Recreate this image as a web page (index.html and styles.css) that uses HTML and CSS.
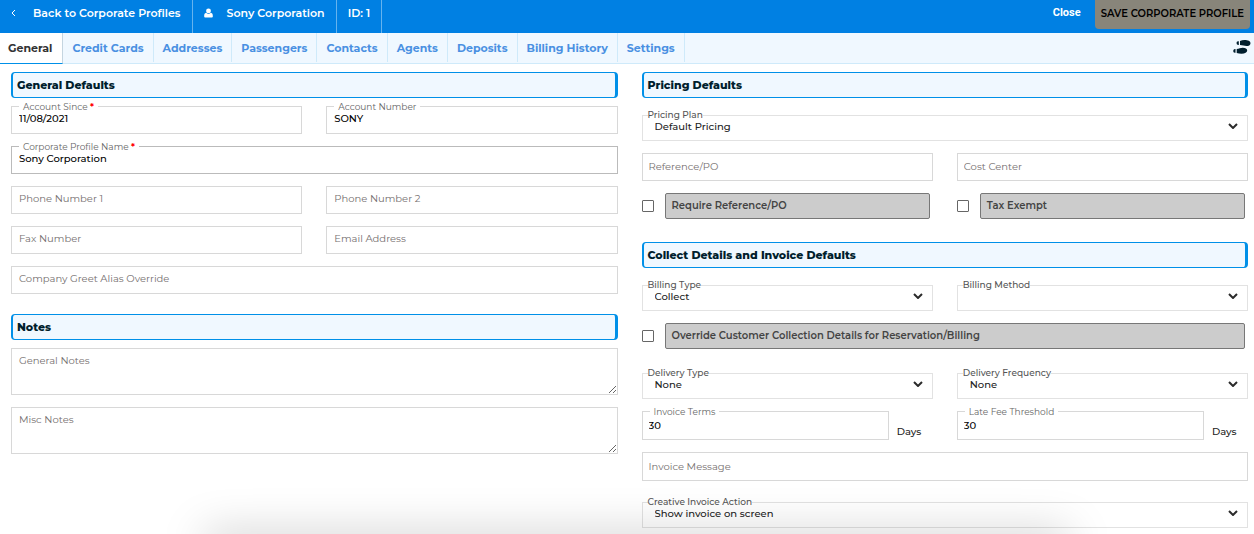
FILE: index.html
```html
<!DOCTYPE html>
<html lang="en">
<head>
    <meta charset="UTF-8">
    <meta name="viewport" content="width=device-width, initial-scale=1.0">
    <title>Corporate Profile</title>
    <link rel="stylesheet" href="styles.css">
</head>
<body>
<header class="topbar">
    <a class="crumb back" href="#">
        <svg class="back-icon" viewBox="0 0 5 8"><path d="M4 1 1 4l3 3"/></svg>
        Back to Corporate Profiles
    </a>
    <span class="crumb">
        <svg class="user-icon" viewBox="0 0 10 10"><circle cx="5" cy="2.7" r="2.7"/><path d="M2.300 4.800C.8 5.200.2 6.500.2 8.200v.7q0 1.100 1.100 1.100h7.400q1.100 0 1.100-1.100v-.7c0-1.700-.6-3-2.100-3.400Q5 7.200 2.300 4.800z"/></svg>
        Sony Corporation
    </span>
    <span class="crumb">ID: 1</span>
    <div class="actions">
        <button type="button" class="close-btn">Close</button>
        <button type="submit" form="profileForm" class="save-btn">SAVE CORPORATE PROFILE</button>
    </div>
</header>

<nav class="tabs">
    <a class="tab active" href="#">General</a>
    <a class="tab" href="#">Credit Cards</a>
    <a class="tab" href="#">Addresses</a>
    <a class="tab" href="#">Passengers</a>
    <a class="tab" href="#">Contacts</a>
    <a class="tab" href="#">Agents</a>
    <a class="tab" href="#">Deposits</a>
    <a class="tab" href="#">Billing History</a>
    <a class="tab" href="#">Settings</a>
    <button type="button" class="steps-btn" aria-label="Activity log">
        <svg class="steps-icon" viewBox="0 0 18 14"><path d="M7 1Q9 .2 11.500 0C15 0 17.500 1.200 17.500 3.200S15.500 6 13.500 6C11.500 6 9.500 5 7 5zM5.800 1.200V5H5Q3.500 4.800 3.500 3.100T5 1.200zM3.700 9C6 9 7.500 7.800 9.800 7.800c2.500 0 4.400 1 4.400 2.700 0 2-2.200 3.200-5.700 3.200Q6 13.600 3.700 13zM2.500 9.100v3.700h-.8Q.2 12.500.2 11t1.500-1.900z"/></svg>
    </button>
</nav>

<form class="columns" id="profileForm">
    <div class="column">
        <section class="section">
            <h2>General Defaults</h2>
            <div class="fields">
                <div class="field">
                    <label for="accountSince">Account Since <b>*</b></label>
                    <input type="text" id="accountSince" value="11/08/2021">
                </div>
                <div class="field">
                    <label for="accountNumber">Account Number</label>
                    <input type="text" id="accountNumber" value="SONY">
                </div>
                <div class="field wide strong">
                    <label for="profileName">Corporate Profile Name <b>*</b></label>
                    <input type="text" id="profileName" value="Sony Corporation">
                </div>
                <div class="field">
                    <input type="tel" placeholder="Phone Number 1" aria-label="Phone Number 1">
                </div>
                <div class="field">
                    <input type="tel" placeholder="Phone Number 2" aria-label="Phone Number 2">
                </div>
                <div class="field">
                    <input type="tel" placeholder="Fax Number" aria-label="Fax Number">
                </div>
                <div class="field">
                    <input type="email" placeholder="Email Address" aria-label="Email Address">
                </div>
                <div class="field wide">
                    <input type="text" placeholder="Company Greet Alias Override" aria-label="Company Greet Alias Override">
                </div>
            </div>
        </section>

        <section class="section">
            <h2>Notes</h2>
            <div class="fields">
                <div class="field wide">
                    <textarea placeholder="General Notes" aria-label="General Notes"></textarea>
                </div>
                <div class="field wide">
                    <textarea placeholder="Misc Notes" aria-label="Misc Notes"></textarea>
                </div>
            </div>
        </section>
    </div>

    <div class="column billing">
        <section class="section">
            <h2>Pricing Defaults</h2>
            <div class="fields">
                <div class="field select wide">
                    <label for="pricingPlan">Pricing Plan</label>
                    <select id="pricingPlan"><option>Default Pricing</option></select>
                    <svg class="chevron" viewBox="0 0 10 6"><path d="M1 1l4 4 4-4"/></svg>
                </div>
                <div class="field">
                    <input type="text" placeholder="Reference/PO" aria-label="Reference/PO">
                </div>
                <div class="field">
                    <input type="text" placeholder="Cost Center" aria-label="Cost Center">
                </div>
                <div class="check">
                    <input type="checkbox" id="requireRef">
                    <label for="requireRef">Require Reference/PO</label>
                </div>
                <div class="check">
                    <input type="checkbox" id="taxExempt">
                    <label for="taxExempt">Tax Exempt</label>
                </div>
            </div>
        </section>

        <section class="section">
            <h2>Collect Details and Invoice Defaults</h2>
            <div class="fields">
                <div class="field select">
                    <label for="billingType">Billing Type</label>
                    <select id="billingType"><option>Collect</option></select>
                    <svg class="chevron" viewBox="0 0 10 6"><path d="M1 1l4 4 4-4"/></svg>
                </div>
                <div class="field select">
                    <label for="billingMethod">Billing Method</label>
                    <select id="billingMethod"><option></option></select>
                    <svg class="chevron" viewBox="0 0 10 6"><path d="M1 1l4 4 4-4"/></svg>
                </div>
                <div class="check wide">
                    <input type="checkbox" id="overrideCollect">
                    <label for="overrideCollect">Override Customer Collection Details for Reservation/Billing</label>
                </div>
                <div class="field select">
                    <label for="deliveryType">Delivery Type</label>
                    <select id="deliveryType"><option>None</option></select>
                    <svg class="chevron" viewBox="0 0 10 6"><path d="M1 1l4 4 4-4"/></svg>
                </div>
                <div class="field select">
                    <label for="deliveryFrequency">Delivery Frequency</label>
                    <select id="deliveryFrequency"><option>None</option></select>
                    <svg class="chevron" viewBox="0 0 10 6"><path d="M1 1l4 4 4-4"/></svg>
                </div>
                <div class="field">
                    <label for="invoiceTerms">Invoice Terms</label>
                    <input class="tall" type="text" id="invoiceTerms" value="30">
                    <span class="unit">Days</span>
                </div>
                <div class="field">
                    <label for="lateFee">Late Fee Threshold</label>
                    <input class="tall" type="text" id="lateFee" value="30">
                    <span class="unit">Days</span>
                </div>
                <div class="field wide">
                    <input class="tall" type="text" placeholder="Invoice Message" aria-label="Invoice Message">
                </div>
                <div class="field select wide">
                    <label for="invoiceAction">Creative Invoice Action</label>
                    <select id="invoiceAction"><option>Show invoice on screen</option></select>
                    <svg class="chevron" viewBox="0 0 10 6"><path d="M1 1l4 4 4-4"/></svg>
                </div>
            </div>
        </section>
    </div>
</form>

<div class="bottom-shade"></div>
</body>
</html>
```
FILE: styles.css
```css
* {
    box-sizing: border-box;
}
body {
    margin: 0;
    font-family: Montserrat, Inter, "Liberation Sans", sans-serif;
    font-size: 10px;
    color: #222;
    background-color: #fff;
}
a {
    text-decoration: none;
}
button, input, select, textarea {
    font-family: inherit;
}

/* top bar */
.topbar {
    display: flex;
    height: 33px;
    background-color: #0080e3;
    color: #fff;
}
.crumb {
    display: flex;
    align-items: center;
    padding: 0 11px 7px;
    border-right: 1px solid #66b3ee;
    color: #fff;
    font-size: 11px;
    font-weight: 600;
}
.back-icon {
    width: 5px;
    height: 8px;
    margin-right: 17px;
    fill: none;
    stroke: #fff;
}
.user-icon {
    width: 9px;
    height: 10px;
    margin-right: 14px;
    fill: #fff;
}
.actions {
    display: flex;
    align-items: flex-start;
    gap: 14px;
    margin-left: auto;
    padding-right: 4px;
}
.close-btn {
    height: 24px;
    padding: 0;
    border: none;
    background: none;
    color: #fff;
    font-family: Roboto, sans-serif;
    font-size: 11px;
    font-weight: bold;
    cursor: pointer;
}
.save-btn {
    height: 29px;
    padding: 0 6px 2px;
    border: none;
    border-radius: 0 0 4px 4px;
    background-color: #88857a;
    color: #000;
    font-size: 10px;
    font-weight: 600;
    cursor: pointer;
}

/* tabs */
.tabs {
    display: flex;
    height: 31px;
    background-color: #f0f8ff;
    border-bottom: 1px solid #cfeafa;
}
.tab {
    display: flex;
    align-items: center;
    height: 29px;
    padding: 0 9px;
    border-right: 1px solid #cfeafa;
    color: #4a90e2;
    font-size: 11px;
    font-weight: 700;
}
.tab.active {
    height: 31px;
    padding: 0 10px 0 8px;
    border-right-color: #c5d5e0;
    border-bottom: 1px solid #0090e8;
    background-color: #fff;
    color: #333;
}
.steps-btn {
    margin-left: auto;
    padding: 0 3px 3px;
    border: none;
    background: none;
}
.steps-icon {
    display: block;
    width: 18px;
    height: 14px;
    fill: #001e2d;
}

/* form */
.columns {
    display: grid;
    grid-template-columns: 1fr 1fr;
    gap: 24px;
    padding: 8px 6px 0 11px;
}
.section + .section {
    margin-top: 20px;
}
h2 {
    height: 26px;
    margin: 0 0 8px;
    padding-left: 4px;
    border: 1px solid #0090e8;
    border-left-width: 2px;
    border-right-width: 3px;
    border-radius: 4px;
    background-color: #f0f8ff;
    color: #001e2d;
    font-size: 11px;
    font-weight: 800;
    line-height: 24px;
}
.fields {
    display: grid;
    grid-template-columns: 1fr 1fr;
    gap: 12px 24px;
}
.wide {
    grid-column: 1 / -1;
}
.field {
    position: relative;
    display: flex;
    min-width: 0;
}
.field input, .field textarea, .field select {
    flex: 1;
    min-width: 0;
    width: 100%;
    height: 28px;
    padding: 0 7px 3px;
    border: 1px solid #d8d8d8;
    border-radius: 0;
    background-color: #fff;
    color: #000;
    font-size: 10px;
    font-weight: 500;
}
.field.strong input {
    border-color: #bbb;
}
.field input::placeholder, .field textarea::placeholder {
    color: #756f6f;
    font-weight: 400;
    opacity: 1;
}
.field textarea {
    height: 47px;
    padding-top: 5px;
    resize: vertical;
}
.billing .field input {
    padding: 0 6px 1px;
}
.field .tall {
    height: 29px;
}
.field label {
    position: absolute;
    top: -6px;
    left: 8px;
    padding: 0 4px;
    background-color: #fff;
    color: #666;
    font-size: 9px;
    line-height: 14px;
}
.field label b {
    color: #f00;
}
.field.select {
    margin-top: 9px;
}
.field.select label {
    top: -7px;
    left: 6px;
    padding: 0;
    color: #555;
    font-weight: 500;
}
.field select {
    height: 26px;
    padding: 0 24px 4px 12px;
    border-color: #e2e2e2;
    color: #222;
    appearance: none;
}
.chevron {
    position: absolute;
    top: 8px;
    right: 10px;
    width: 10px;
    height: 6px;
    fill: none;
    stroke: #2b2b2b;
    stroke-width: 2;
    pointer-events: none;
}
.unit {
    align-self: flex-end;
    width: 44px;
    padding-left: 8px;
    font-weight: 500;
    line-height: 16px;
}
.check {
    display: flex;
    align-items: center;
    gap: 11px;
    margin: 0 3px 3px 0;
}
.check input {
    width: 12px;
    height: 12px;
    margin: 0;
    border: 1px solid #666;
    border-radius: 1px;
    background-color: #fff;
    appearance: none;
}
.check input:checked {
    background-color: #0080e3;
}
.check label {
    flex: 1;
    height: 26px;
    padding-left: 6px;
    border: 1px solid #777;
    border-radius: 2px;
    background-color: #ccc;
    color: #444;
    font-size: 10px;
    font-weight: 600;
    line-height: 24px;
}

/* soft shade along the bottom edge */
.bottom-shade {
    position: fixed;
    bottom: -20px;
    left: 205px;
    right: 185px;
    height: 20px;
    box-shadow: 0 0 44px rgba(0, 0, 0, 0.25);
    pointer-events: none;
}
```
